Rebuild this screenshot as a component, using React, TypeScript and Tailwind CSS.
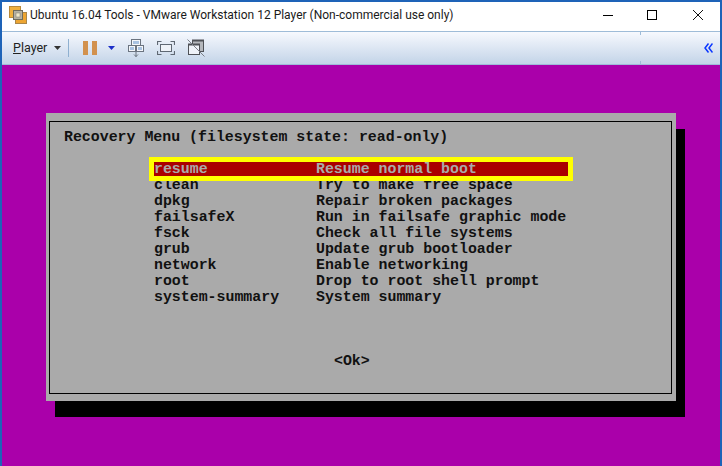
const rows: [string, string][] = [
  ["clean", "Try to make free space"],
  ["dpkg", "Repair broken packages"],
  ["failsafeX", "Run in failsafe graphic mode"],
  ["fsck", "Check all file systems"],
  ["grub", "Update grub bootloader"],
  ["network", "Enable networking"],
  ["root", "Drop to root shell prompt"],
  ["system-summary", "System summary"],
];

function AppIcon() {
  return (
    <svg width="18" height="18" viewBox="0 0 18 18" className="shrink-0">
      <rect x="0.5" y="0.5" width="11" height="11" fill="#f0b03c" stroke="#b98a3a" />
      <rect x="6.5" y="6.5" width="11" height="11" fill="#eda532" stroke="#a9864a" />
      <rect x="4.5" y="4.5" width="9" height="9" fill="#b5b1a3" stroke="#6f6c5e" />
      <rect x="7" y="7" width="4" height="4" fill="#efe8cc" stroke="#7d7a6b" strokeWidth="0.5" />
    </svg>
  );
}

function SendKeysIcon() {
  return (
    <svg width="16" height="18" viewBox="0 0 16 18" fill="none" stroke="#6b7480">
      <rect x="3.5" y="0.5" width="9" height="6" fill="#f3f6fa" />
      <rect x="5" y="2" width="6" height="3" fill="#a9c3e2" stroke="none" />
      <rect x="0.5" y="6.5" width="7" height="6" fill="#f3f6fa" />
      <rect x="8.5" y="6.5" width="7" height="6" fill="#f3f6fa" />
      <rect x="2" y="8" width="4" height="3" fill="#a9c3e2" stroke="none" />
      <rect x="10" y="8" width="4" height="3" fill="#a9c3e2" stroke="none" />
      <path d="M8 13v5M6 15.5 8 17.5l2-2" />
    </svg>
  );
}

function FullScreenIcon() {
  return (
    <svg width="18" height="14" viewBox="0 0 18 14" fill="none" stroke="#5f6873">
      <rect x="3.5" y="3.5" width="11" height="7" fill="#eef2f8" />
      <path d="M.5 4V.5H4.5M13.5.5h4V4M17.5 10v3.5h-4M4.5 13.5h-4V10" strokeWidth="1.2" />
    </svg>
  );
}

function UnityIcon() {
  return (
    <svg width="18" height="18" viewBox="0 0 18 18" fill="none">
      <rect x="5.5" y="1.5" width="11" height="11" fill="#b4b7bc" stroke="#4e5157" />
      <path d="M5 1.5h12" stroke="#4e5157" strokeWidth="2" />
      <rect x="1.5" y="5.5" width="11" height="10" fill="#eef2f8" stroke="#4e5157" />
      <path d="M1 5.5h12" stroke="#4e5157" strokeWidth="2" />
      <path d="M.5.5l17 17" stroke="#7a7f87" />
    </svg>
  );
}

function Caret({ color, className }: { color: string; className?: string }) {
  return (
    <svg width="7" height="4" viewBox="0 0 7 4" className={className}>
      <path d="M0 0h7L3.5 4z" fill={color} />
    </svg>
  );
}

export default function App() {
  return (
    <div className="flex h-[466px] w-[722px] flex-col overflow-hidden border-x-2 border-t-2 border-[#1e63b8] bg-white font-['Roboto',sans-serif]">
      <div className="flex h-[29px] shrink-0 items-center pb-[3px] pl-[7px] text-[#1a1a1a]">
        <AppIcon />
        <span className="ml-[3px] text-[12px] leading-none whitespace-nowrap">
          Ubuntu 16.04 Tools - VMware Workstation 12 Player (Non-commercial use only)
        </span>
        <div className="ml-auto flex items-center text-black">
          <div className="mr-[34px] h-px w-[10px] bg-black" />
          <div className="mr-[36px] h-[10px] w-[10px] border border-black" />
          <svg className="mr-[17px]" width="10" height="10" viewBox="0 0 10 10" stroke="#111"><path d="M0 0l10 10M10 0L0 10" /></svg>
        </div>
      </div>
      <div className="relative flex h-[34px] shrink-0 items-center border-y border-[#9fbcd8] bg-gradient-to-b from-[#f7f9fe] to-[#c3d4e8] pr-[7px] pl-[11px]">
        <div className="absolute top-0 left-[638px] h-[3px] w-px bg-[#9fbcd8]" />
        <div className="absolute bottom-0 left-[638px] h-[3px] w-px bg-[#9fbcd8]" />
        <span className="text-[12.5px] leading-none text-[#222]"><span className="underline">P</span>layer</span>
        <Caret color="#333" className="ml-[7px]" />
        <div className="ml-[7px] h-[18px] w-px bg-[#8fb0d0]" />
        <div className="ml-[14px] flex gap-[4px]">
          <div className="h-[14px] w-[5px] bg-[#d2914e]" />
          <div className="h-[14px] w-[5px] bg-[#d2914e]" />
        </div>
        <Caret color="#1c2fc8" className="ml-[11px]" />
        <div className="ml-[13px]"><SendKeysIcon /></div>
        <div className="ml-[13px]"><FullScreenIcon /></div>
        <div className="ml-[12px]"><UnityIcon /></div>
        <svg className="ml-auto" width="9" height="10" viewBox="0 0 9 10" fill="none" stroke="#0a36ff" strokeWidth="1.5">
          <path d="M4.5.5 1 5l3.5 4.5M8.5.5 5 5l3.5 4.5" />
        </svg>
      </div>
      <div className="flex min-h-0 flex-1 justify-center bg-[#aa00aa] pt-[48px]">
        <div className="h-[288px] w-[630px] bg-[#aaaaaa] pt-[8px] pr-[4px] pl-[3px] shadow-[9px_16px_0_0_#000]">
          <div className="h-[273px] border border-black px-[14px] pt-[7px] font-['Liberation_Mono',monospace] text-[14.9px] leading-[16px] font-bold whitespace-pre text-[#111]">
            <div>Recovery Menu (filesystem state: read-only)</div>
            <div className="mt-[17px] pl-[90px]">
              <div className="relative z-10 flex h-[14px] w-[414px] bg-[#aa0000] leading-[14px] text-[#aaaaaa] outline-[5px] outline-[#ffff00]">
                <span className="w-[162px]">resume</span>
                <span>Resume normal boot</span>
              </div>
              <div className="pt-px">
                {rows.map(([a, b]) => (
                  <div key={a} className="flex h-[16px]">
                    <span className="w-[162px]">{a}</span>
                    <span>{b}</span>
                  </div>
                ))}
              </div>
            </div>
            <div className="mt-[48px] pl-[270px]">{"<Ok>"}</div>
          </div>
        </div>
      </div>
    </div>
  );
}
